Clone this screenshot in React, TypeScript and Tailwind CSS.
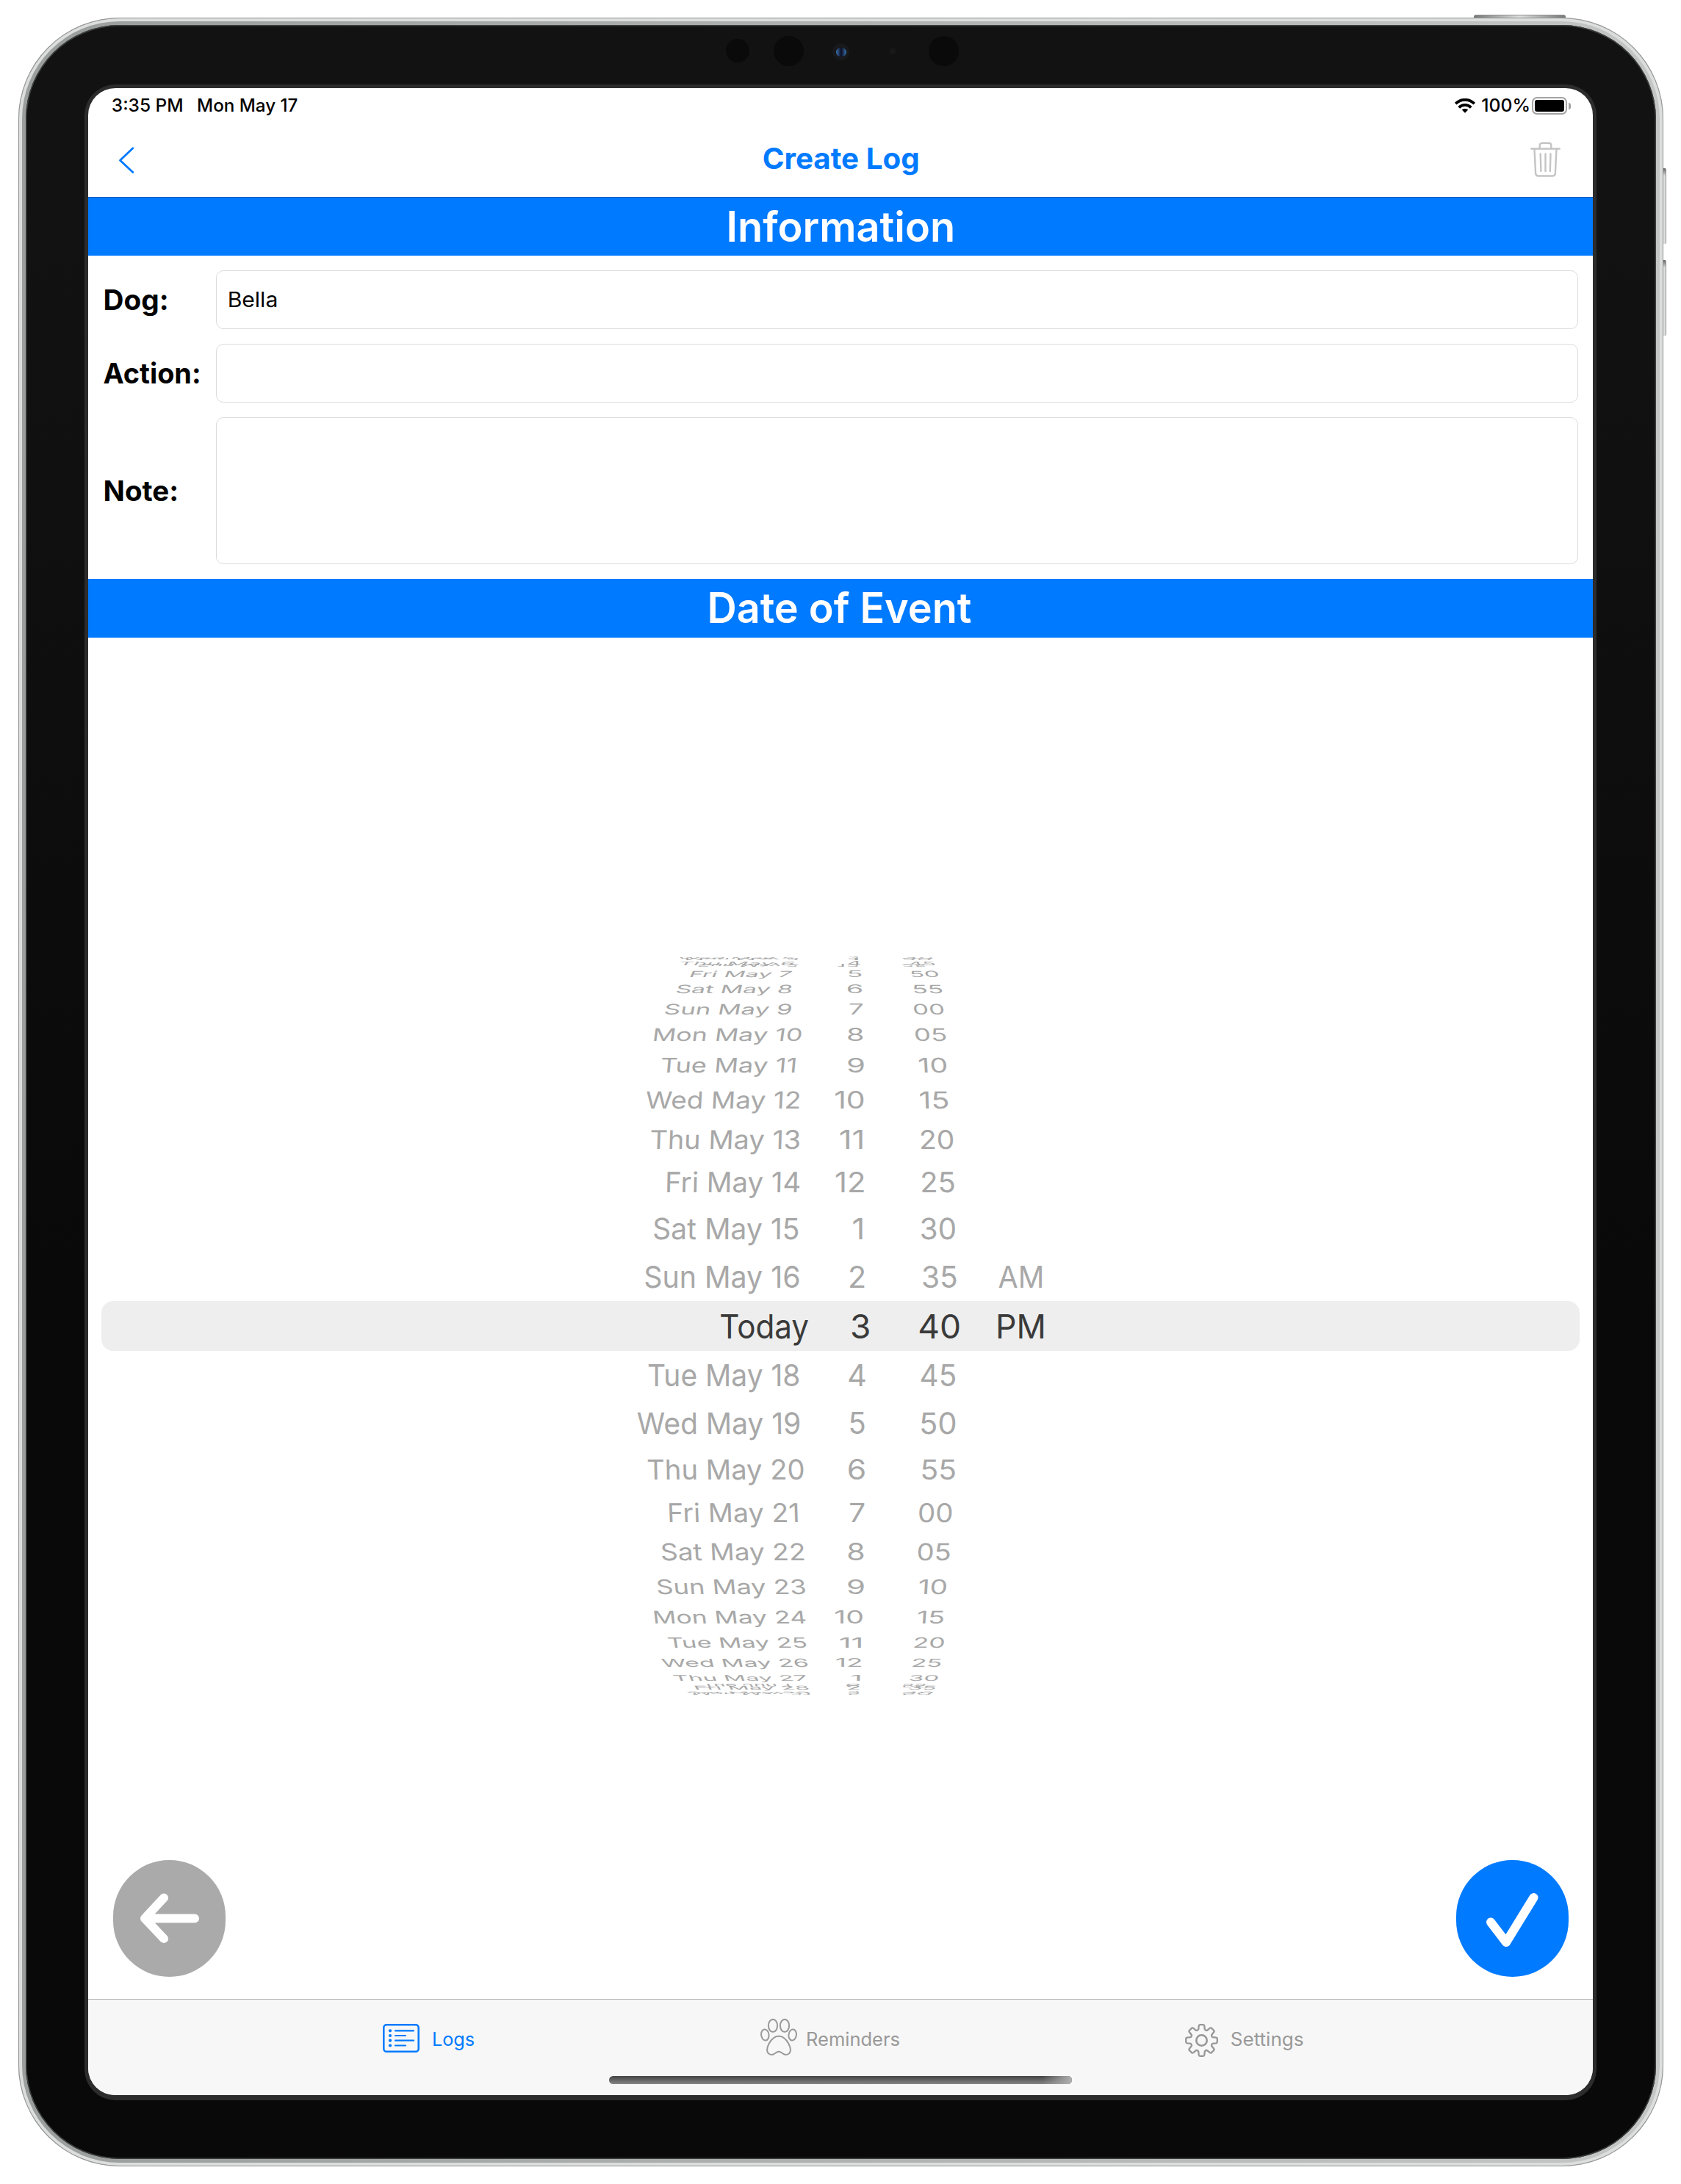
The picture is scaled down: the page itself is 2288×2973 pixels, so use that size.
import React from "react";

const CAP = 0.7273; // Inter cap height, em
const CAP_TOP = 0.1365; // cap top below the line box top at line-height 1, em

const ctx = document.createElement("canvas").getContext("2d")!;

function inkOf(text: string, weight: number, size: number) {
  ctx.font = `${weight} 400px Inter`;
  const m = ctx.measureText(text);
  const k = size / 400;
  return {
    left: -m.actualBoundingBoxLeft * k,
    width: (m.actualBoundingBoxLeft + m.actualBoundingBoxRight) * k,
  };
}

/** Text fitted to an ink width and a cap height. */
function Fit({
  text, w, cap, weight = 400, size, lean = 0, flip = false,
}: {
  text: string; w: number; cap: number; weight?: number; size?: number; lean?: number; flip?: boolean;
}) {
  const fs = size ?? cap / CAP;
  const ink = inkOf(text, weight, fs);
  const sx = (w - Math.abs(lean)) / ink.width;
  const base = fs * CAP;
  const sy = (cap / base) * (flip ? -1 : 1);
  const k = -lean / base;
  const e = lean > 0 ? lean : 0;
  const f = flip ? cap : 0;
  return (
    <span className="block shrink-0" style={{ width: w, height: cap }}>
      <span
        className="block w-max origin-top-left whitespace-nowrap leading-none"
        style={{
          fontSize: fs,
          fontWeight: weight,
          transform: `matrix(${sx},0,${k},${sy},${e},${f}) translate(${-ink.left}px,${-CAP_TOP * fs}px)`,
        }}
      >
        {text}
      </span>
    </span>
  );
}

type Cell = [string, number, number];
type Row = { top: number; bottom: number; lean: number; date: Cell; hour: Cell; minute: Cell; half?: Cell; on?: boolean; flip?: boolean };

const rows: Row[] = [
  { top: -1.5, bottom: 0.6, lean: 5, date: ["Wed May 5", 82, 242], hour: ["3", 34.3, 48.6], minute: ["40", 9.8, 50.6] },
  { top: -0.6, bottom: 1.6, lean: 0, date: ["Mon May 3", 94, 246], hour: ["1", 36, 48], minute: ["30", 8, 47], flip: true },
  { top: 7.3, bottom: 11.3, lean: -5, date: ["Sun May 2", 109, 247], hour: ["12", 20, 48.6], minute: ["25", 7.8, 40.4], flip: true },
  { top: 4.3, bottom: 9.3, lean: 6, date: ["Thu May 6", 83.7, 242], hour: ["4", 34.3, 51.4], minute: ["45", 16.7, 53.5] },
  { top: 16.7, bottom: 25, lean: 6, date: ["Fri May 7", 99.2, 238.8], hour: ["5", 34.7, 52.7], minute: ["50", 18.8, 58] },
  { top: 35.7, bottom: 47, lean: 5, date: ["Sat May 8", 80, 238.8], hour: ["6", 33.5, 53], minute: ["55", 22.4, 63.3] },
  { top: 62, bottom: 76.3, lean: 4.5, date: ["Sun May 9", 64.5, 238], hour: ["7", 36.7, 54.3], minute: ["00", 22.9, 64.9] },
  { top: 95, bottom: 112.3, lean: 4, date: ["Mon May 10", 49.8, 251.8], hour: ["8", 33.9, 54.3], minute: ["05", 24.9, 68.2] },
  { top: 135, bottom: 155, lean: 3, date: ["Tue May 11", 59.6, 243.3], hour: ["9", 33.9, 55.5], minute: ["10", 30.6, 68.6] },
  { top: 181, bottom: 204.3, lean: 2, date: ["Wed May 12", 38.8, 248.6], hour: ["10", 17.1, 55.5], minute: ["15", 32.2, 71] },
  { top: 233.7, bottom: 259.3, lean: 1.5, date: ["Thu May 13", 45.7, 248.6], hour: ["11", 23.7, 53.9], minute: ["20", 33.1, 77.6] },
  { top: 291, bottom: 318.7, lean: 1, date: ["Fri May 14", 67.8, 248.6], hour: ["12", 18, 55.9], minute: ["25", 34.7, 79.2] },
  { top: 353.3, bottom: 382.3, lean: 0.5, date: ["Sat May 15", 49.8, 246.9], hour: ["1", 41.6, 53.9], minute: ["30", 33.5, 80] },
  { top: 418.3, bottom: 448.3, lean: 0, date: ["Sun May 16", 38, 247.3], hour: ["2", 36.7, 56.7], minute: ["35", 35.9, 82], half: ["AM", 19.2, 78.4] },
  { top: 484, bottom: 517.3, lean: 0, date: ["Today", 141.2, 260.4], hour: ["3", 39.2, 62.9], minute: ["40", 31.4, 85.7], half: ["PM", 18.4, 80.4], on: true },
  { top: 552.3, bottom: 582.3, lean: 0, date: ["Tue May 18", 42.9, 247.3], hour: ["4", 35.1, 57.6], minute: ["45", 33.5, 80.4] },
  { top: 618, bottom: 647.3, lean: -0.5, date: ["Wed May 19", 27.3, 248.2], hour: ["5", 37.1, 57.1], minute: ["50", 33.5, 80.4] },
  { top: 681.7, bottom: 709, lean: -1, date: ["Thu May 20", 41.6, 253.9], hour: ["6", 34.7, 56.7], minute: ["55", 34.7, 80.4] },
  { top: 741.3, bottom: 767, lean: -1.5, date: ["Fri May 21", 70.6, 246.1], hour: ["7", 37.1, 56.7], minute: ["00", 30.6, 75.9] },
  { top: 796, bottom: 819.3, lean: -2, date: ["Sat May 22", 60, 254.7], hour: ["8", 34.3, 55.5], minute: ["05", 29, 73.5] },
  { top: 845.3, bottom: 865.3, lean: -3, date: ["Sun May 23", 53.9, 256.3], hour: ["9", 33.9, 55.5], minute: ["10", 31, 68.6] },
  { top: 888, bottom: 905.3, lean: -3.5, date: ["Mon May 24", 49.8, 257.1], hour: ["10", 17.1, 53.9], minute: ["15", 29, 65.3] },
  { top: 924, bottom: 938, lean: -4, date: ["Tue May 25", 68.6, 258.4], hour: ["11", 23.7, 52.2], minute: ["20", 24.1, 65.7] },
  { top: 952.9, bottom: 964, lean: -4.5, date: ["Wed May 26", 59.6, 260], hour: ["12", 18.8, 52.2], minute: ["25", 21.6, 61.6] },
  { top: 975.3, bottom: 983, lean: -5, date: ["Thu May 27", 75.9, 259.2], hour: ["1", 39.2, 50.6], minute: ["30", 17.6, 57.6] },
  { top: 988, bottom: 992.7, lean: 5, date: ["Tue Jun 1", 116, 236], hour: ["6", 32, 50], minute: ["55", 7.8, 40.4], flip: true },
  { top: 990.5, bottom: 995.7, lean: -5, date: ["Fri May 28", 105.3, 261.2], hour: ["2", 34.3, 49.8], minute: ["35", 16.7, 54.3] },
  { top: 998.2, bottom: 1000.4, lean: -5, date: ["Sat May 29", 94, 262], hour: ["3", 34.3, 49.5], minute: ["40", 9.8, 50.6] },
  { top: 999.2, bottom: 1001.4, lean: 0, date: ["Mon May 31", 104, 262], hour: ["5", 34.3, 49.5], minute: ["50", 8, 47], flip: true },
];

function WheelColumn({ pick, width, leanBy }: { pick: "date" | "hour" | "minute" | "half"; width: number; leanBy: number }) {
  return (
    <div className="grid h-full content-start justify-items-start" style={{ width }}>
      {rows.map((r, i) => {
        const c = r[pick];
        if (!c) return null;
        return (
          <div
            key={i}
            className={r.on ? "[grid-area:1/1] text-[#3a3a3a]" : "[grid-area:1/1] text-[#a8a8a8]"}
            style={{ transform: `translate(${c[1]}px,${r.top - 0.5}px)` }}
          >
            <Fit text={c[0]} w={c[2] - c[1]} cap={r.bottom - r.top} size={46} lean={r.lean * leanBy} flip={r.flip} />
          </div>
        );
      })}
    </div>
  );
}

function Banner({ text, w, className }: { text: string; w: number; className: string }) {
  return (
    <div className={`flex h-20 shrink-0 items-center bg-[#007aff] text-white ${className}`}>
      <Fit text={text} w={w} cap={41.5} weight={600} />
    </div>
  );
}

function Field({ label, w, h, indent, children }: { label: string; w: number; h: string; indent: string; children?: React.ReactNode }) {
  return (
    <div className={`flex items-center ${h}`}>
      <div className={`flex w-[153px] shrink-0 text-black ${indent}`}>
        <Fit text={label} w={w} cap={28} weight={700} />
      </div>
      <div className="flex h-full flex-1 items-center rounded-[10px] border border-[#dcdcde] pl-[17px]">{children}</div>
    </div>
  );
}

function Wifi() {
  return (
    <svg width="28" height="20" viewBox="0 0 28 20" fill="none" stroke="#000" strokeWidth="3.8">
      <path d="M1.2 7.2C8.4 0 19.6 0 26.8 7.2" />
      <path d="M5.7 12.400C10.4 7.800 17.6 7.800 22.3 12.400" />
      <path d="M14 19.8l-4.2-4.2c2.3-2 6.100-2 8.400 0z" fill="#000" stroke="none" />
    </svg>
  );
}

function Trash() {
  return (
    <svg width="41" height="48" viewBox="0 0 41 48" fill="none" stroke="#c4c4c4" strokeWidth="2.4" strokeLinecap="round" strokeLinejoin="round">
      <path d="M1.200 9.500h38.600" />
      <path d="M12.700 9V5c0-2 1.300-3.200 3.300-3.200h9c2 0 3.300 1.200 3.300 3.200v4" />
      <path d="M5.500 10l1.600 32.600c.1 2.400 1.500 3.900 3.900 3.900h19c2.400 0 3.800-1.500 3.900-3.900L35.500 10" />
      <path d="M13.700 16.500l.7 23.500M20.500 16.500V40M27.500 16.500L26.800 40" />
    </svg>
  );
}

function LogsIcon() {
  return (
    <svg width="50" height="39" viewBox="0 0 50 39" fill="none" stroke="#007aff" strokeWidth="2.200" strokeLinecap="round">
      <rect x="1.300" y="1.200" width="47.400" height="36.600" rx="3.800" strokeWidth="2.500" />
      {[9.3, 16, 22.7, 29.5].map((y, i) => (
        <g key={y}>
          <circle cx="10" cy={y} r="2.100" fill="#007aff" stroke="none" />
          <path d={`M17 ${y}H${i % 2 ? 31 : 42}`} />
        </g>
      ))}
    </svg>
  );
}

function Paw() {
  return (
    <svg width="50" height="50" viewBox="0 0 50 50" fill="none" stroke="#999" strokeWidth="2" strokeLinejoin="round">
      <ellipse cx="17" cy="9.500" rx="6.100" ry="8.600" />
      <ellipse cx="33" cy="9.500" rx="6.100" ry="8.600" />
      <ellipse cx="6.300" cy="22" rx="5.200" ry="7.600" transform="rotate(-8 6.300 22)" />
      <ellipse cx="43.700" cy="22" rx="5.200" ry="7.600" transform="rotate(8 43.700 22)" />
      <path d="M25 23.700c-6.200 0-10.500 4.800-13.400 10.300-2 3.800-3.200 7.600-2.100 11 1.200 3.700 5.600 4.900 8.900 3.100 2.400-1.300 3.900-3.300 6.600-3.300s4.200 2 6.600 3.300c3.300 1.800 7.700.6 8.900-3.100 1.100-3.400-.1-7.200-2.100-11C35.500 28.500 31.200 23.700 25 23.700z" />
    </svg>
  );
}

function gearPath() {
  const parts: string[] = [];
  const pt = (r: number, a: number) => {
    const t = (a * Math.PI) / 180;
    return `${(22.5 + r * Math.sin(t)).toFixed(2)} ${(22.5 - r * Math.cos(t)).toFixed(2)}`;
  };
  for (let i = 0; i < 8; i++) {
    const a = i * 45;
    parts.push(`${i ? "L" : "M"}${pt(15.6, a - 16)}`);
    parts.push(`L${pt(20, a - 11)}`);
    parts.push(`Q${pt(21.6, a - 9.5)} ${pt(21.4, a - 6)}`);
    parts.push(`L${pt(21.4, a + 6)}`);
    parts.push(`Q${pt(21.6, a + 9.5)} ${pt(20, a + 11)}`);
    parts.push(`L${pt(15.6, a + 16)}`);
    parts.push(`Q${pt(14.2, a + 22.5)} ${pt(15.6, a + 29)}`);
  }
  return parts.join("") + "Z";
}

function Gear() {
  return (
    <svg width="45" height="45" viewBox="0 0 45 45" fill="none" stroke="#979797" strokeWidth="2.300" strokeLinejoin="round">
      <path d={gearPath()} />
      <circle cx="22.500" cy="22.500" r="7.200" strokeWidth="2.600" />
    </svg>
  );
}

function StatusBar() {
  return (
    <div className="flex h-12 items-start pt-[15px] pl-[33px] pr-[30px] text-black">
      <Fit text="3:35 PM" w={95} cap={17.3} weight={500} />
      <div className="w-[22px]" />
      <Fit text="Mon May 17" w={134.5} cap={17.3} weight={500} />
      <div className="-mt-[3px] ml-auto flex h-6 items-center">
        <Wifi />
        <div className="w-[9px]" />
        <Fit text="100%" w={63.5} cap={17.3} weight={500} />
        <div className="ml-[5px] h-6 w-12 rounded-[7px] border-2 border-[#a3a3a3] p-[2px]">
          <div className="h-full w-full rounded-[3px] bg-black" />
        </div>
        <div className="ml-[2px] h-[9px] w-[3px] rounded-r-full bg-[#a3a3a3]" />
      </div>
    </div>
  );
}

function NavBar() {
  return (
    <div className="flex h-[100px] items-start pl-[41px] pr-11 pt-[25px]">
      <svg className="mt-[7px]" width="22" height="37" viewBox="0 0 22 37" fill="none" stroke="#007aff" strokeWidth="2.800" strokeLinecap="round" strokeLinejoin="round">
        <path d="M19.800 1.800L2.500 18.300L19.800 34.500" />
      </svg>
      <div className="ml-[856px] mt-[8px] text-[#007aff]">
        <Fit text="Create Log" w={210.5} cap={29} weight={700} />
      </div>
      <div className="ml-auto">
        <Trash />
      </div>
    </div>
  );
}

function DatePicker() {
  return (
    <div className="relative h-[1000px] shrink-0">
      <div className="absolute inset-x-[18px] top-[466px] h-[68px] rounded-2xl bg-[#eeeeee]" />
      <div className="relative ml-[720px] flex h-full">
        <WheelColumn pick="date" width={280} leanBy={0.6} />
        <WheelColumn pick="hour" width={100} leanBy={0} />
        <WheelColumn pick="minute" width={120} leanBy={-0.4} />
        <WheelColumn pick="half" width={140} leanBy={0} />
      </div>
    </div>
  );
}

function TabBar() {
  return (
    <div className="relative flex h-[131px] items-start border-t border-[#b1b1b3] bg-[#f7f7f7] text-[#999]">
      <div className="ml-[401px] mt-[33px] flex text-[#007aff]">
        <LogsIcon />
        <div className="ml-[19px] mt-[10.5px]"><Fit text="Logs" w={55} cap={18.5} /></div>
      </div>
      <div className="ml-[390px] mt-[26px] flex">
        <Paw />
        <div className="ml-[14px] mt-[17.5px]"><Fit text="Reminders" w={125} cap={18.5} /></div>
      </div>
      <div className="ml-[389px] mt-[33px] flex">
        <Gear />
        <div className="ml-[18px] mt-[10.5px]"><Fit text="Settings" w={97.5} cap={18.5} /></div>
      </div>
      <div className="absolute left-[709px] top-[104px] h-[11px] w-[630px] overflow-hidden rounded-full bg-linear-to-b from-[#444] to-[#868686]">
        <div className="ml-auto h-full w-10 bg-linear-to-r from-transparent to-[#b0b0b0]" />
      </div>
    </div>
  );
}

function Screen() {
  return (
    <div className="flex h-[2732px] w-[2048px] flex-col overflow-hidden rounded-[37px] bg-white">
      <StatusBar />
      <NavBar />
      <Banner text="Information" w={304.5} className="border-t border-[#0058b8] pl-[872px]" />
      <div className="flex flex-col gap-5 py-5 pl-[21px] pr-5">
        <Field label="Dog:" w={84} h="h-20" indent="pl-[2px]">
          <Fit text="Bella" w={64} cap={20.5} />
        </Field>
        <Field label="Action:" w={130} h="h-20" indent="pl-0" />
        <Field label="Note:" w={97.5} h="h-[200px]" indent="pl-[2px]" />
      </div>
      <Banner text="Date of Event" w={356} className="pl-[846px]" />
      <div className="flex flex-1 flex-col pt-[437px]">
        <DatePicker />
        <div className="mt-[227px] flex justify-between pl-[34px] pr-[33px]">
          <button className="flex h-[159px] w-[153px] rounded-full bg-[#aaaaaa]">
            <svg width="153" height="159" viewBox="0 0 153 159" fill="none" stroke="#fff" strokeWidth="12" strokeLinecap="round" strokeLinejoin="round">
              <path d="M69 51.500L43 79.500L69 107M43 79.500H111" />
            </svg>
          </button>
          <button className="flex h-[159px] w-[153px] rounded-full bg-[#007aff]">
            <svg width="153" height="159" viewBox="0 0 153 159" fill="none" stroke="#fff" strokeWidth="12" strokeLinecap="round" strokeLinejoin="round">
              <path d="M47 84.500L68 112L105.500 51" />
            </svg>
          </button>
        </div>
      </div>
      <TabBar />
    </div>
  );
}

const sideKey = "absolute left-[2264px] w-[4px] rounded-r-[2px] border-r border-[#8c8f8d] bg-linear-to-b from-[#666] via-[#dfe1e0] via-10% to-[#dfe1e0]";

export default function App() {
  return (
    <div className="relative h-[2973px] w-[2288px] overflow-hidden bg-white pl-[25px] pt-[24px] font-['Inter',sans-serif]">
      <div className="absolute left-[2006px] top-[20px] h-[7px] w-[125px] rounded-t-[3px] border-t border-[#8c8f8d] bg-linear-to-r from-[#777] via-[#dfe1e0] to-[#777]" />
      <div className={`${sideKey} top-[229px] h-[103px]`} />
      <div className={`${sideKey} top-[354px] h-[103px]`} />
      <div className="relative h-[2925px] w-[2239px] rounded-[138px] bg-linear-to-r from-[#9a9e9c] to-[#c4c6c5] p-[10px] shadow-[inset_0_0_0_1px_#8e918f,inset_0_0_0_5px_#dcdedd]">
        <div className="h-[2905px] w-[2219px] rounded-[128px] bg-linear-to-b from-[#121212] from-10% to-[#090909] to-60% pl-[80px] pt-[81px] shadow-[inset_0_0_0_1.500px_#3c3f3e]">
          <div className="w-max rounded-[42px] bg-[#2c2c2c] px-[5px] pb-[7px] pt-[5px]">
            <Screen />
          </div>
        </div>
        <div className="absolute left-[963px] top-[29px] size-8 rounded-full bg-[#0a0a0a]" />
        <div className="absolute left-[1028px] top-[25px] size-[41px] rounded-full bg-[#0a0a0a]" />
        <div className="absolute left-[1108px] top-[35px] flex size-[23px] items-center justify-center rounded-full bg-[#17191b]">
          <div className="h-[12px] w-[14px] rounded-full bg-linear-to-r from-[#3a78b4] via-[#0c0f24] to-[#3a78b4]" />
        </div>
        <div className="absolute left-[1186px] top-[42px] size-[8px] rounded-full bg-[#191919]" />
        <div className="absolute left-[1239px] top-[25px] size-[41px] rounded-full bg-[#0a0a0a]" />
      </div>
    </div>
  );
}
